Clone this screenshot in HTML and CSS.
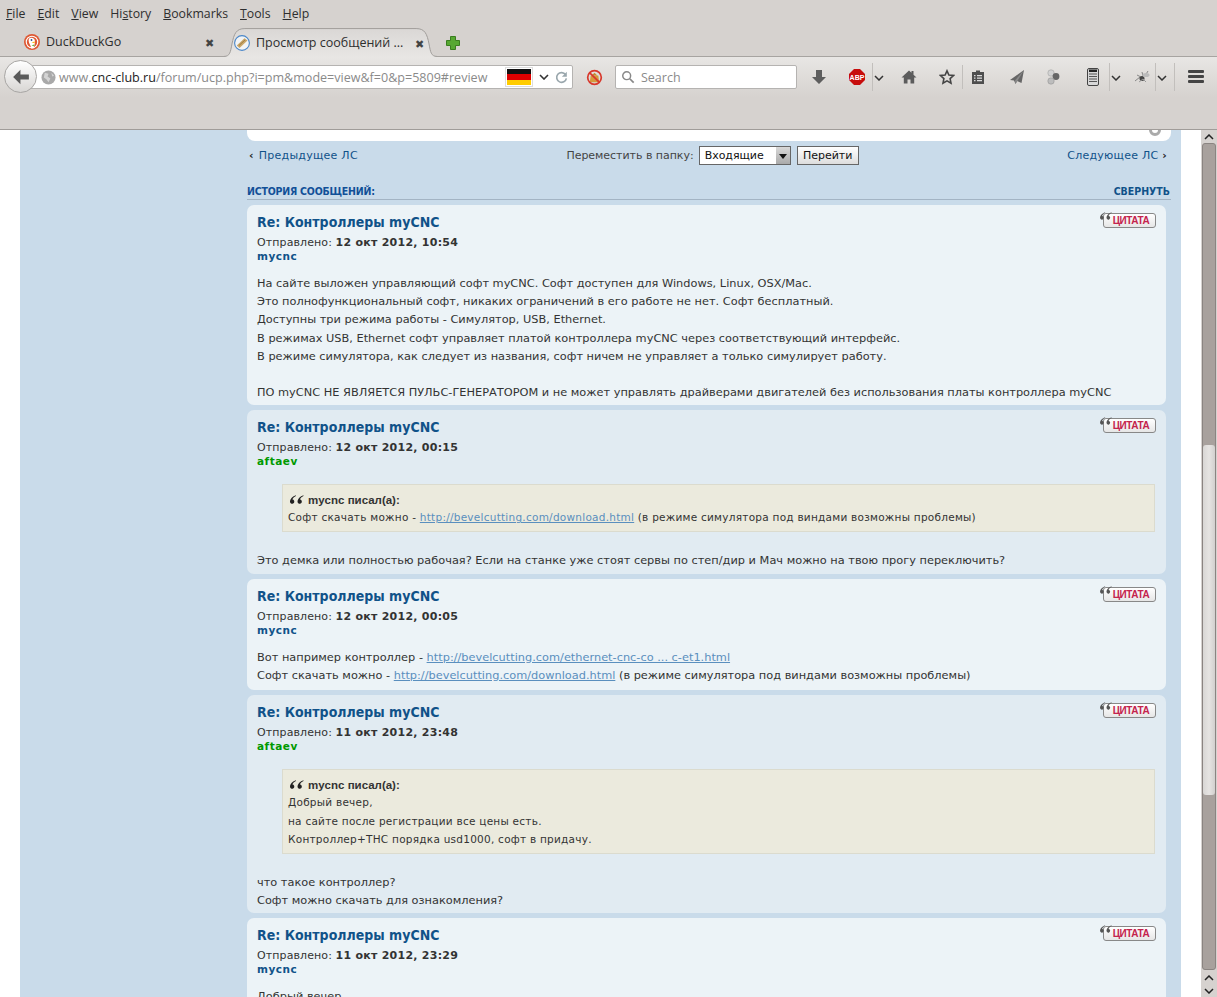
FILE: index.html
```html
<!DOCTYPE html>
<html lang="ru">
<head>
<meta charset="utf-8">
<title>Просмотр сообщений</title>
<link rel="stylesheet" href="styles.css">
</head>
<body>
<header class="chrome">
  <nav class="menubar">
    <span><u>F</u>ile</span><span><u>E</u>dit</span><span><u>V</u>iew</span><span>Hi<u>s</u>tory</span><span><u>B</u>ookmarks</span><span><u>T</u>ools</span><span><u>H</u>elp</span>
  </nav>
  <div class="tabbar">
    <div class="tab">
      <svg class="favicon" viewBox="0 0 16 16"><circle cx="8" cy="8" r="8" fill="#de5833"/><circle cx="8" cy="8" r="6.300" fill="#fff"/><circle cx="8" cy="8" r="5.200" fill="#de5833"/><path d="M5 4.500c2.500-1.500 6-.5 6 3 0 2.500-1 4.500-1.500 7H7c.5-3-3.500-6-2-10z" fill="#fff"/><circle cx="7.500" cy="6" r=".9" fill="#2d4f8e"/><path d="M7.500 8.200l3.500-.7-.6 1.800z" fill="#fdb30a"/><path d="M7.500 11.500l2.500-1 .5 2z" fill="#65bc46"/></svg>
      <span class="tab-title">DuckDuckGo</span>
      <span class="tab-x">✖</span>
    </div>
    <div class="tab active">
      <svg class="tab-shape" viewBox="0 0 214 29" aria-hidden="true"><defs><linearGradient id="tabfill" x1="0" y1="0" x2="0" y2="1"><stop offset="0" stop-color="#dad7d5"/><stop offset="1" stop-color="#e8e6e4"/></linearGradient></defs><path d="M0 28.500C6 28.500 6.500 24 8 16 10 6 12 .5 21 .5H193C202 .5 204 6 206 16 207.500 24 208 28.500 214 28.500V29H0z" fill="url(#tabfill)"/><path d="M0 28.500C6 28.500 6.500 24 8 16 10 6 12 .5 21 .5H193C202 .5 204 6 206 16 207.500 24 208 28.500 214 28.500" fill="none" stroke="#a09d9a"/></svg>
      <svg class="favicon" viewBox="0 0 16 16"><circle cx="8" cy="8" r="7.400" fill="#f2f4f5" stroke="#4a86c8" stroke-width="1.100"/><path d="M2.800 10.500L10.500 3.200l3 2.300L5.500 13z" fill="#c8a566"/><path d="M5 10.500l6-5.500" stroke="#94733c" stroke-width=".8"/></svg>
      <span class="tab-title">Просмотр сообщений ...</span>
      <span class="tab-x">✖</span>
    </div>
    <svg class="newtab" viewBox="0 0 16 16"><path d="M5.500 1.500h5v4h4v5h-4v4h-5v-4h-4v-5h4z" fill="#57a832" stroke="#3a7d1f" stroke-width="1"/></svg>
  </div>
  <div class="toolbar">
    <div class="urlwrap">
      <div class="urlbar">
        <svg class="globe" viewBox="0 0 16 16"><circle cx="8" cy="8" r="7.500" fill="#a9a9a9"/><path d="M4 3l4 1-1 3 3 2-2 4-2-3-3-2zM11 3l3 3-2 1z" fill="#d4d4d4"/></svg>
        <span class="url"><span class="dim">www.</span>cnc-club.ru<span class="dim">/forum/ucp.php?i=pm&amp;mode=view&amp;f=0&amp;p=5809#review</span></span>
        <span class="flag"><i class="f1"></i><i class="f2"></i><i class="f3"></i></span>
        <svg class="chev" viewBox="0 0 10 6"><path d="M1 1l4 4 4-4" fill="none" stroke="#333" stroke-width="1.600"/></svg>
        <svg class="reload" viewBox="0 0 16 16"><path d="M13 4.500A6 6 0 1 0 14 9" fill="none" stroke="#9aa7ad" stroke-width="2"/><path d="M14.500 1v6h-6z" fill="#9aa7ad"/></svg>
      </div>
      <div class="backbtn"><svg viewBox="0 0 16 16"><path d="M1 8l6.500-6.500v4.200H15v4.600H7.500v4.200z" fill="#5a5a5a"/></svg></div>
    </div>
    <svg class="noscript" viewBox="0 0 18 18"><path d="M5 7h8l1 7H4z" fill="#d69a3c"/><path d="M6 7l3-3 3 3" fill="#c48a2e"/><circle cx="9" cy="9" r="7.200" fill="none" stroke="#d8372b" stroke-width="1.800"/><path d="M4 4l10 10" stroke="#d8372b" stroke-width="1.800"/></svg>
    <div class="search">
      <svg viewBox="0 0 16 16"><circle cx="6.500" cy="6.500" r="4.500" fill="none" stroke="#888" stroke-width="1.700"/><path d="M10 10l4.500 4.500" stroke="#888" stroke-width="2"/></svg>
      <span>Search</span>
    </div>
    <div class="tools">
      <svg class="ic dl" viewBox="0 0 16 16"><path d="M5 1h6v7h4l-7 7-7-7h4z" fill="#5e5e5e"/></svg>
      <svg class="ic abp" viewBox="0 0 16 16"><path d="M5 0h6l5 5v6l-5 5H5l-5-5V5z" fill="#c70d0c"/><text x="8" y="10.800" text-anchor="middle" class="abp-text">ABP</text></svg>
      <i class="sep s1"></i>
      <svg class="mini m1" viewBox="0 0 10 6"><path d="M1 1l4 4 4-4" fill="none" stroke="#333" stroke-width="1.500"/></svg>
      <svg class="ic home" viewBox="0 0 16 16"><path d="M8 1.500L.5 8.500h2.300v6h3.700v-4h3v4h3.700v-6h2.300l-3-2.800V2h-2v1.800z" fill="#5c5c5c"/></svg>
      <svg class="ic star" viewBox="0 0 16 16"><path d="M8 1.800l1.900 4.200 4.600.5-3.400 3.100.9 4.600L8 11.900l-4 2.300.9-4.600L1.500 6.500l4.600-.5z" fill="none" stroke="#444" stroke-width="1.600"/></svg>
      <i class="sep s2"></i>
      <svg class="ic clip" viewBox="0 0 16 16"><path d="M2 3h4V1.500h4V3h4v12H2z" fill="#4e4e4e"/><path d="M4 6h1.500v1.200H4zM7 6h5v1.200H7zM4 8.500h1.500v1.200H4zM7 8.500h5v1.200H7zM4 11h1.500v1.200H4zM7 11h5v1.200H7z" fill="#ddd"/></svg>
      <svg class="ic plane" viewBox="0 0 16 16"><path d="M15 1L1 11l4 .5 1.500 3.500 1.500-3 4.500 2z" fill="#666"/><path d="M15 1L6 11.500l.5 3.500z" fill="#8a8a8a"/></svg>
      <svg class="ic balls" viewBox="0 0 16 16"><circle cx="6" cy="4" r="3.200" fill="#d2d2d2" stroke="#999" stroke-width=".5"/><circle cx="11" cy="7.500" r="3.400" fill="#666"/><circle cx="6" cy="12" r="3.200" fill="#bdbdbd" stroke="#8a8a8a" stroke-width=".5"/></svg>
      <svg class="ic sheet" viewBox="0 0 16 18"><rect x="2.500" y=".5" width="11" height="17" rx="1.500" fill="#d8d8d8" stroke="#444"/><rect x="4" y="1.500" width="8" height="2.500" fill="#222"/><path d="M4 6h8M4 8.500h8M4 11h8M4 13.500h8" stroke="#555" stroke-width="1.200"/></svg>
      <i class="sep s3"></i>
      <svg class="mini m2" viewBox="0 0 10 6"><path d="M1 1l4 4 4-4" fill="none" stroke="#333" stroke-width="1.500"/></svg>
      <svg class="ic bug" viewBox="0 0 18 14"><path d="M1 11l5-4M3 5l4 2M8 2l1 4M14 1l-3 5" stroke="#888" stroke-width="1"/><ellipse cx="8" cy="8.500" rx="2.500" ry="2.500" fill="#444"/><ellipse cx="12" cy="5" rx="3.500" ry="2" fill="#bbb"/><path d="M5 12l4-3 3 3" stroke="#999" stroke-width="1" fill="none"/></svg>
      <i class="sep s4"></i>
      <svg class="mini m3" viewBox="0 0 10 6"><path d="M1 1l4 4 4-4" fill="none" stroke="#333" stroke-width="1.500"/></svg>
      <i class="sep s5"></i>
      <div class="burger"><i></i><i></i><i></i></div>
    </div>
  </div>
</header>
<div class="viewport">
  <main class="page">
    <div class="wrap">
      <aside class="side"></aside>
      <div class="content">
        <div class="toppanel"><i class="ring"></i></div>
        <div class="pager">
          <a class="prev"><b class="arr">‹</b>Предыдущее ЛС</a>
          <div class="move">
            <span>Переместить в папку:</span>
            <span class="select"><span>Входящие</span><i class="selbtn"></i></span>
            <span class="go">Перейти</span>
          </div>
          <a class="next">Следующее ЛС <b class="arr">›</b></a>
        </div>
        <div class="history"><span>ИСТОРИЯ СООБЩЕНИЙ:</span><a>СВЕРНУТЬ</a></div>

        <article class="post light">
          <div class="quotebtn"><svg class="qm" viewBox="0 0 13 8"><path id="qmark" d="M5.500 0C2.500 1 0 3.500 0 6a2 2 0 1 0 3.400-1.500c-.4-.3-.8-.4-1.200-.4C2.700 2.800 3.800 1.500 5.500.8zM12.500 0C9.500 1 7 3.500 7 6a2 2 0 1 0 3.400-1.500c-.4-.3-.8-.4-1.200-.4C9.700 2.800 10.800 1.500 12.500.8z"/></svg><span class="qb">ЦИТАТА</span></div>
          <h3>Re: Контроллеры myCNC</h3>
          <p class="meta">Отправлено: <b>12 окт 2012, 10:54</b></p>
          <p class="author">mycnc</p>
          <div class="body">
            На сайте выложен управляющий софт myCNC. Софт доступен для Windows, Linux, OSX/Mac.<br>
            Это полнофункциональный софт, никаких ограничений в его работе не нет. Софт бесплатный.<br>
            Доступны три режима работы - Симулятор, USB, Ethernet.<br>
            В режимах USB, Ethernet софт управляет платой контроллера myCNC через соответствующий интерфейс.<br>
            В режиме симулятора, как следует из названия, софт ничем не управляет а только симулирует работу.<br>
            <br>
            ПО myCNC НЕ ЯВЛЯЕТСЯ ПУЛЬС-ГЕНЕРАТОРОМ и не может управлять драйверами двигателей без использования платы контроллера myCNC
          </div>
        </article>

        <article class="post dark">
          <div class="quotebtn"><svg class="qm" viewBox="0 0 13 8"><use href="#qmark"/></svg><span class="qb">ЦИТАТА</span></div>
          <h3>Re: Контроллеры myCNC</h3>
          <p class="meta">Отправлено: <b>12 окт 2012, 00:15</b></p>
          <p class="author green">aftaev</p>
          <blockquote>
            <cite><svg class="bq" viewBox="0 0 13 8"><use href="#qmark"/></svg>mycnc писал(а):</cite>
            Софт скачать можно - <a class="lnk">http://bevelcutting.com/download.html</a> (в режиме симулятора под виндами возможны проблемы)
          </blockquote>
          <div class="body after">Это демка или полностью рабочая? Если на станке уже стоят сервы по степ/дир и Мач можно на твою прогу переключить?</div>
        </article>

        <article class="post light tall">
          <div class="quotebtn"><svg class="qm" viewBox="0 0 13 8"><use href="#qmark"/></svg><span class="qb">ЦИТАТА</span></div>
          <h3>Re: Контроллеры myCNC</h3>
          <p class="meta">Отправлено: <b>12 окт 2012, 00:05</b></p>
          <p class="author">mycnc</p>
          <div class="body">
            Вот например контроллер - <a class="lnk">http://bevelcutting.com/ethernet-cnc-co ... c-et1.html</a><br>
            Софт скачать можно - <a class="lnk">http://bevelcutting.com/download.html</a> (в режиме симулятора под виндами возможны проблемы)
          </div>
        </article>

        <article class="post dark">
          <div class="quotebtn"><svg class="qm" viewBox="0 0 13 8"><use href="#qmark"/></svg><span class="qb">ЦИТАТА</span></div>
          <h3>Re: Контроллеры myCNC</h3>
          <p class="meta">Отправлено: <b>11 окт 2012, 23:48</b></p>
          <p class="author green">aftaev</p>
          <blockquote>
            <cite><svg class="bq" viewBox="0 0 13 8"><use href="#qmark"/></svg>mycnc писал(а):</cite>
            Добрый вечер,<br>
            на сайте после регистрации все цены есть.<br>
            Контроллер+ТНС порядка usd1000, софт в придачу.
          </blockquote>
          <div class="body after">что такое контроллер?<br>Софт можно скачать для ознакомления?</div>
        </article>

        <article class="post light">
          <div class="quotebtn"><svg class="qm" viewBox="0 0 13 8"><use href="#qmark"/></svg><span class="qb">ЦИТАТА</span></div>
          <h3>Re: Контроллеры myCNC</h3>
          <p class="meta">Отправлено: <b>11 окт 2012, 23:29</b></p>
          <p class="author">mycnc</p>
          <div class="body">Добрый вечер,</div>
        </article>
      </div>
    </div>
  </main>
  <div class="scrollbar">
    <svg class="sb-arrow" viewBox="0 0 10 6"><path d="M1 5l4-4 4 4" fill="none" stroke="#222" stroke-width="1.500"/></svg>
    <div class="sb-track"><div class="sb-thumb"></div></div>
    <svg class="sb-arrow" viewBox="0 0 10 6"><path d="M1 5l4-4 4 4" fill="none" stroke="#222" stroke-width="1.500"/></svg>
    <svg class="sb-arrow" viewBox="0 0 10 6"><path d="M1 1l4 4 4-4" fill="none" stroke="#222" stroke-width="1.500"/></svg>
  </div>
</div>
</body>
</html>
```
FILE: styles.css
```css
* { box-sizing: border-box; }
html, body { margin: 0; height: 100%; overflow: hidden; background: #fff; }
body { display: flex; flex-direction: column; height: 997px; font-family: "DejaVu Sans", sans-serif; }
p, h3 { margin: 0; }

.chrome { flex: none; height: 130px; background: #d6d2cf; border-bottom: 1px solid #a09c99; font-family: "Open Sans", sans-serif; color: #2e2e2e; display: flex; flex-direction: column; }
.menubar { height: 27px; display: flex; gap: 12px; padding: 5px 0 0 6px; font-size: 12.300px; line-height: 18px; }
.tabbar { height: 30px; display: flex; align-items: flex-end; padding-left: 12px; border-bottom: 1px solid #a7a4a1; }
.tab { width: 212px; height: 29px; display: flex; align-items: center; font-size: 12.500px; padding: 0 10px 0 12px; gap: 6px; position: relative; }
.tab.active { width: 213px; padding: 0 13px 0 10px; margin-bottom: -1px; height: 29px; }
.tab-shape { position: absolute; left: 0; top: 0; width: 213px; height: 29px; }
.tab-title { flex: 1; white-space: nowrap; overflow: hidden; position: relative; }
.tab-x { font-size: 11px; color: #444; position: relative; top: 1px; }
.favicon { width: 16px; height: 16px; flex: none; position: relative; }
.newtab { width: 16px; height: 16px; margin: 0 0 5px 8px; }
.toolbar { height: 40px; display: flex; align-items: center; background: linear-gradient(#e8e6e4, #d6d2cf); padding-left: 4px; }
.urlwrap { position: relative; width: 569px; height: 34px; flex: none; }
.backbtn { position: absolute; left: 0; top: 0; width: 33px; height: 33px; border-radius: 50%; background: linear-gradient(#fff, #d8d6d4); border: 1px solid #a8a6a4; display: flex; align-items: center; justify-content: center; }
.backbtn svg { width: 18px; height: 18px; }
.urlbar { position: absolute; left: 26px; right: 0; top: 5px; height: 24px; background: #fff; border: 1px solid #b5b3b1; border-radius: 0 2px 2px 0; display: flex; align-items: center; padding-left: 10px; }
.globe { width: 15px; height: 15px; flex: none; }
.url { font-size: 12.550px; margin-left: 3px; color: #222; flex: 1; white-space: nowrap; }
.dim { color: #8a8a8a; }
.flag { width: 28px; height: 20px; display: flex; flex-direction: column; border: 1px solid #ddd; flex: none; padding: 1px; }
.flag i { flex: 1; display: block; }
.f1 { background: #111; } .f2 { background: #d00; } .f3 { background: #fc0; }
.chev { width: 10px; height: 6px; margin: 0 6px 0 6px; flex: none; }
.reload { width: 13px; height: 13px; margin-right: 4px; flex: none; }
.noscript { width: 17px; height: 17px; margin-left: 13px; flex: none; }
.search { width: 182px; height: 24px; margin-left: 12px; background: #fff; border: 1px solid #b5b3b1; border-radius: 2px; display: flex; align-items: center; gap: 6px; padding-left: 5px; color: #8a8a8a; font-size: 12.500px; flex: none; }
.search svg { width: 14px; height: 14px; }
.tools { position: relative; flex: 1; align-self: stretch; }
.ic, .mini, .sep, .burger { position: absolute; }
.ic { width: 16px; height: 16px; top: 12px; }
.dl { left: 14px; }
.abp { left: 52px; }
.abp-text { font: bold 7px "Liberation Sans", sans-serif; fill: #fff; }
.sep { width: 1px; background: #c2bfbc; top: 6px; height: 28px; }
.s1 { left: 75px; } .s2 { left: 165px; top: 8px; height: 24px; } .s3 { left: 312px; } .s4 { left: 358px; } .s5 { left: 377px; }
.mini { width: 10px; height: 6px; top: 18px; }
.m1 { left: 77px; } .m2 { left: 314px; } .m3 { left: 360px; }
.home { left: 104px; } .star { left: 142px; } .clip { left: 173px; } .plane { left: 212px; } .balls { left: 248px; }
.sheet { left: 288px; top: 11px; height: 18px; } .bug { left: 337px; top: 13px; height: 14px; width: 18px; }
.burger { left: 391px; top: 13px; width: 16px; display: flex; flex-direction: column; gap: 2px; }
.burger i { display: block; height: 3px; background: #444; border-radius: 1px; }

.viewport { flex: 1; display: flex; min-height: 0; }
.page { flex: 1; min-width: 0; overflow: hidden; padding: 0 20px; background: #fff; }
.wrap { display: flex; background: #c9dbea; height: 100%; padding-right: 10px; }
.side { width: 227px; flex: none; }
.content { flex: 1; min-width: 0; }
.toppanel { height: 11px; background: #fff; border-radius: 0 0 8px 8px; position: relative; overflow: hidden; }
.ring { position: absolute; right: 10px; top: -6px; width: 12px; height: 12px; border: 3px solid #aaa; border-radius: 50%; }
.pager { height: 29px; display: flex; align-items: center; justify-content: space-between; font-size: 11px; color: #333; padding: 0 4px 0 2px; }
.pager a { color: #105289; letter-spacing: .25px; }
.arr { color: #222; }
.prev .arr { margin-right: 5px; }
.move { display: flex; align-items: center; gap: 5px; color: #444; letter-spacing: -.03px; }
.select { width: 92px; height: 19px; background: #fff; border: 1px solid #666; display: flex; align-items: center; justify-content: space-between; padding-left: 5px; color: #111; font-size: 11px; }
.selbtn { width: 14px; height: 17px; background: linear-gradient(#d8d8d8, #aaa); position: relative; }
.selbtn::after { content: ""; position: absolute; left: 3px; top: 7px; border: 4px solid transparent; border-top: 5px solid #111; border-bottom: 0; }
.go { height: 19px; width: 62px; margin-left: 1px; background: linear-gradient(#fff, #ddd); border: 1px solid #666; text-align: center; line-height: 17px; color: #111; }
.history { margin-top: 14px; height: 16px; border-bottom: 1px solid #a3b4c4; display: flex; justify-content: space-between; font-family: "DejaVu Sans Condensed", "DejaVu Sans", sans-serif; font-stretch: condensed; font-size: 10.500px; font-weight: bold; color: #115098; line-height: 15px; }
.history span { letter-spacing: -.2px; }
.history a { color: #105289; padding-right: 1px; }

.post { width: 919px; margin-top: 5px; border-radius: 7px; padding: 8px 10px 0; position: relative; overflow: hidden; color: #333; }
.light { background: #ecf3f7; }
.dark { background: #e1ebf2; }
.post h3 { font-family: "DejaVu Sans Condensed", "DejaVu Sans", sans-serif; font-stretch: condensed; font-size: 14px; line-height: 18px; font-weight: bold; color: #105289; }
.meta { font-size: 11px; line-height: 13px; letter-spacing: .1px; margin-top: 5px; }
.meta b { letter-spacing: .25px; }
.author { margin-top: 1px; font-weight: bold; font-size: 10.500px; letter-spacing: .5px; line-height: 13px; color: #105289; }
.author.green { color: #090; }
.body { font-size: 11.350px; line-height: 18.200px; margin-top: 11px; padding-bottom: 4px; }
.tall .body { padding-bottom: 6px; }
.body.after { margin-top: 19.500px; padding-bottom: 4px; }
blockquote { margin: 16px 1px 0 25px; background: #ebeadd; border: 1px solid #dbdbce; padding: 7px 5px 4px; font-size: 10.500px; letter-spacing: .25px; line-height: 18.500px; }
cite { display: block; font-style: normal; letter-spacing: 0; font-family: "Liberation Sans", sans-serif; font-weight: bold; font-size: 11.500px; line-height: 16px; }
.bq { width: 14px; height: 11px; margin: 0 4px 0 2px; fill: #222; vertical-align: -1px; }
.lnk { color: #5a8fbe; text-decoration: underline; }
.quotebtn { position: absolute; right: 10px; top: 8px; display: flex; }
.qb { width: 53px; height: 15px; background: linear-gradient(#fff, #e6e6e6); border: 1px solid #888; border-radius: 3px; color: #c4234d; font: bold 10px/13px "Liberation Sans", sans-serif; text-align: center; padding-left: 3px; letter-spacing: -.5px; }
.qm { position: absolute; left: -3px; top: -1px; width: 12px; height: 8px; fill: #555; }

.scrollbar { width: 16px; flex: none; background: #d6d2cf; display: flex; flex-direction: column; align-items: center; }
.sb-arrow { width: 10px; height: 6px; margin: 4px 0 3px; flex: none; }
.sb-track { flex: 1; width: 14px; background: #a8a19d; border-radius: 3px; border: 1px solid #8a8481; padding-top: 301px; margin-bottom: 1px; }
.sb-thumb { height: 350px; background: linear-gradient(90deg, #d8d6d4, #e6e4e2 50%, #d2d0ce); border-radius: 3px; }
```
